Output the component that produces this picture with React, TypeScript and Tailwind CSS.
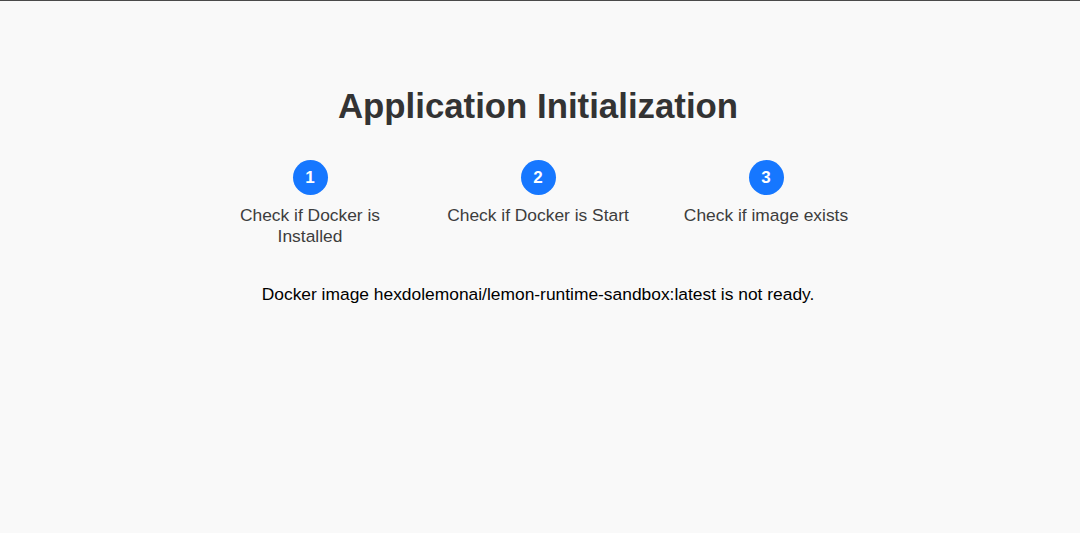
import React from 'react';

type Step = { id: number; label: string };

const steps: Step[] = [
  { id: 1, label: 'Check if Docker is Installed' },
  { id: 2, label: 'Check if Docker is Start' },
  { id: 3, label: 'Check if image exists' },
];

const App: React.FC = () => {
  return (
    <div className="min-h-screen bg-[#f9f9f9] border-t border-[#4a4a4a] flex flex-col items-center pt-[85px] pr-[4px] font-['Liberation_Sans',Arial,sans-serif]">
      <h1 className="text-[34.8px] leading-[40px] font-bold text-[#333333]">Application Initialization</h1>

      <div className="flex gap-[28px] mt-[34px]">
        {steps.map((step) => (
          <div key={step.id} className="w-[200px] flex flex-col items-center">
            <div className="w-[35px] h-[35px] rounded-full bg-[#1677ff] text-white text-[17px] font-bold flex items-center justify-center">
              {step.id}
            </div>
            <p className="mt-[10px] text-[17.4px] leading-[21px] text-[#3d3d3d] text-center">{step.label}</p>
          </div>
        ))}
      </div>

      <p className="mt-[37px] text-[17.4px] leading-[21px] text-black">
        Docker image hexdolemonai/lemon-runtime-sandbox:latest is not ready.
      </p>
    </div>
  );
};

export default App;
